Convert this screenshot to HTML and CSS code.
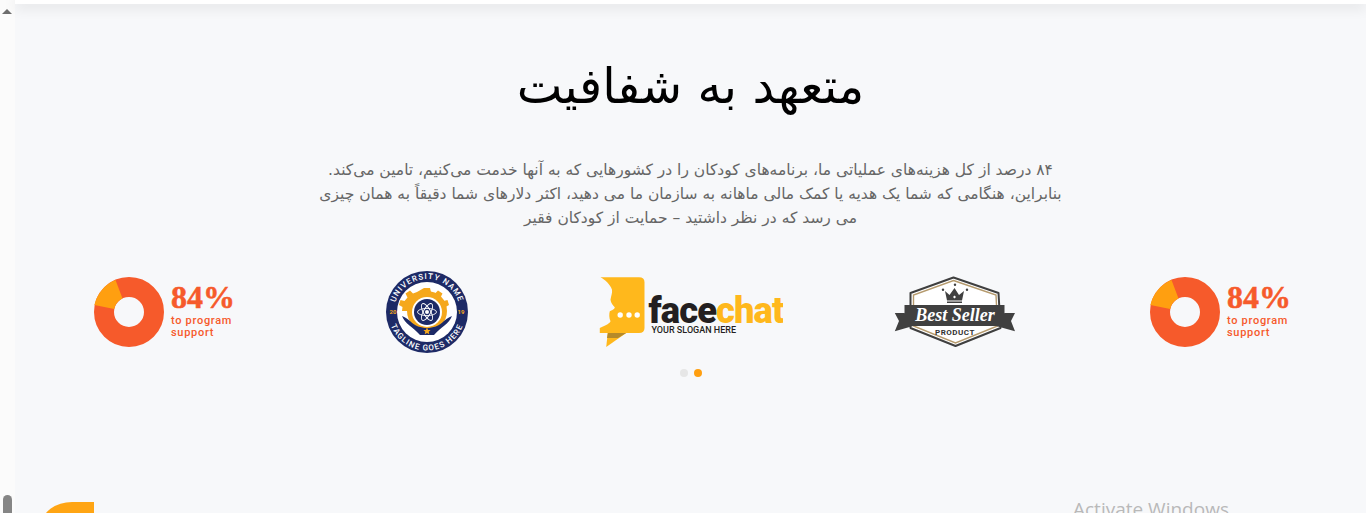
FILE: index.html
```html
<!DOCTYPE html>
<html lang="fa">
<head>
<meta charset="utf-8">
<title>متعهد به شفافیت</title>
<link rel="stylesheet" href="styles.css">
</head>
<body>
<div class="page">
  <aside class="scrollbar">
    <span class="scroll-arrow"></span>
    <span class="scroll-thumb"></span>
  </aside>
  <main class="main">
    <div class="topbar"></div>
    <section class="intro">
      <h1 class="title" dir="rtl">متعهد به شفافیت</h1>
      <p class="lead" dir="rtl">۸۴ درصد از کل هزینه‌های عملیاتی ما، برنامه‌های کودکان را در کشورهایی که به آنها خدمت می‌کنیم، تامین می‌کند.<br>بنابراین، هنگامی که شما یک هدیه یا کمک مالی ماهانه به سازمان ما می دهید، اکثر دلارهای شما دقیقاً به همان چیزی<br>می رسد که در نظر داشتید – حمایت از کودکان فقیر</p>
    </section>
    <section class="logos">
      <div class="logo logo-stat">
        <svg class="donut" width="70" height="70" viewBox="0 0 70 70">
          <circle cx="35" cy="35" r="25" fill="none" stroke="#f65a2b" stroke-width="20"/>
          <path d="M21.5 3 A35 35 0 0 0 0.4 28 L20.2 32 A15 15 0 0 1 28.5 21.5 Z" fill="#ff9f10"/>
        </svg>
        <div class="stat">
          <div class="stat-num">84%</div>
          <div class="stat-label">to program<br>support</div>
        </div>
      </div>
      <div class="logo">
        <svg width="82" height="82" viewBox="0 0 82 82">
          <defs>
            <path id="arcTop" d="M8 41 A33 33 0 0 1 74 41"/>
            <path id="arcBot" d="M2.500 41 A38.500 38.500 0 0 0 79.500 41"/>
          </defs>
          <circle cx="41" cy="41" r="41" fill="#1d2a66"/>
          <circle cx="41" cy="41" r="30" fill="#fff"/>
          <text class="uni-text"><textPath href="#arcTop" startOffset="50%" text-anchor="middle">UNIVERSITY NAME</textPath></text>
          <text class="uni-text"><textPath href="#arcBot" startOffset="50%" text-anchor="middle">TAGLINE GOES HERE</textPath></text>
          <text class="uni-year" x="7" y="43" text-anchor="middle">20</text>
          <text class="uni-year" x="75" y="43" text-anchor="middle">19</text>
          <circle cx="41" cy="40" r="20" fill="#f5a81c"/>
          <path d="M38 17 h6 l1 4 4 1.500 3-3 4.500 3-2 4 3 3.500 4-1 1.500 5-3.500 2 .5 4 H16 l.5-4-3.500-2 1.500-5 4 1 3-3.500-2-4 4.500-3 3 3 4-1.500z" fill="#f5a81c"/>
          <path d="M16 45 C19 53 27 56 34 64 L41 64 L48 64 C55 56 63 53 66 45 C62 47 60 48 58 50 C53 55 47 57 41 57 C35 57 29 55 24 50 C22 48 20 47 16 45Z" fill="#1d2a66"/>
          <circle cx="41" cy="41" r="15" fill="#fff"/>
          <circle cx="41" cy="41" r="13" fill="#1d2a66"/>
          <g fill="none" stroke="#fff" stroke-width=".9">
            <ellipse cx="41" cy="41" rx="9.500" ry="3.600"/>
            <ellipse cx="41" cy="41" rx="9.500" ry="3.600" transform="rotate(60 41 41)"/>
            <ellipse cx="41" cy="41" rx="9.500" ry="3.600" transform="rotate(120 41 41)"/>
          </g>
          <circle cx="41" cy="41" r="2" fill="#fff"/>
          <path d="M41 56.500 l1.100 2.400 2.500.2-1.900 1.700.6 2.500-2.300-1.300-2.300 1.300.6-2.500-1.900-1.700 2.500-.2z" fill="#f5a81c"/>
        </svg>
      </div>
      <div class="logo">
        <svg width="184" height="72" viewBox="0 0 184 72">
          <path d="M1.500 1.300 L40 1.300 Q45.500 1.300 45.500 6.300 L45.500 52 Q45.500 57 40 57 L0.800 57 L0.800 52 C5 50 10 48.500 11.500 45.300 C10 42 10 38 10.800 35.300 C12.500 34.500 15.500 33.500 15.800 31.300 C14 29 11.800 27 11.500 23.700 C12 20 13.500 17 13 13.700 C11 8 6 4 1.500 1.300 Z" fill="#ffb81c"/>
          <path d="M8.800 57 L27.200 57 L7.200 71 Z" fill="#ffb81c"/>
          <path d="M8.800 57 L27.200 57 L19 62 L8 62 Z" fill="#b58a2a"/>
          <circle cx="21.200" cy="39" r="2.700" fill="#fff"/>
          <circle cx="30" cy="39" r="2.700" fill="#fff"/>
          <circle cx="38.200" cy="39" r="2.700" fill="#fff"/>
          <text class="fc-word" x="49.500" y="47"><tspan fill="#231f20">face</tspan><tspan fill="#ffb81c">chat</tspan></text>
          <text class="fc-slogan" x="52.500" y="56.500">YOUR SLOGAN HERE</text>
        </svg>
      </div>
      <div class="logo">
        <svg width="122" height="72" viewBox="0 0 122 72">
          <path d="M59.500 1.500 L104.500 17 L106.500 52 L61.500 70 L16.500 52 L16.500 17 Z" fill="#fff" stroke="#3f3f3f" stroke-width="2" stroke-linejoin="round"/>
          <path d="M59.500 4.500 L102 19 L103.500 50 L61.500 67 L19.500 50 L19.500 19 Z" fill="none" stroke="#b59a6d" stroke-width="1.400"/>
          <path d="M10.500 37 L0.800 37 L5 45 L0.800 55.300 L19 50 L19 45 Z" fill="#404040"/>
          <path d="M110.500 37 L121 37 L117 45 L121 55.300 L102 50 L102 45 Z" fill="#404040"/>
          <rect x="10.500" y="29" width="100" height="21" fill="#404040"/>
          <path d="M53 24.500 L51 15 L55.500 19 L60.500 12 L65 19 L70 15 L68 24.500 Z" fill="#404040"/>
          <rect x="53" y="25.500" width="15" height="1.500" fill="#404040"/>
          <path d="M60.500 19.500 L62 21 L60.500 22.500 L59 21 Z" fill="#fff"/>
          <circle cx="49" cy="13.700" r="1.200" fill="#404040"/>
          <circle cx="61" cy="8.700" r="1.200" fill="#404040"/>
          <circle cx="73" cy="13.700" r="1.200" fill="#404040"/>
          <text class="bs-title" x="61" y="45" text-anchor="middle">Best Seller</text>
          <text class="bs-sub" x="61" y="59" text-anchor="middle">PRODUCT</text>
        </svg>
      </div>
      <div class="logo logo-stat">
        <svg class="donut" width="70" height="70" viewBox="0 0 70 70">
          <circle cx="35" cy="35" r="25" fill="none" stroke="#f65a2b" stroke-width="20"/>
          <path d="M21.5 3 A35 35 0 0 0 0.4 28 L20.2 32 A15 15 0 0 1 28.5 21.5 Z" fill="#ff9f10"/>
        </svg>
        <div class="stat">
          <div class="stat-num">84%</div>
          <div class="stat-label">to program<br>support</div>
        </div>
      </div>
    </section>
    <div class="dots"><span class="dot"></span><span class="dot dot-active"></span></div>
    <div class="next-shape"></div>
  </main>
</div>
<div class="activate">Activate Windows</div>
</body>
</html>
```
FILE: styles.css
```css
* { box-sizing: border-box; }
html, body { margin: 0; height: 513px; overflow: hidden; }
body { background: #f7f8fa; font-family: "DejaVu Sans", sans-serif; }
.page { display: flex; height: 513px; overflow: hidden; }
.scrollbar { width: 15px; flex: none; background: #fbfbfb; display: flex; flex-direction: column; justify-content: space-between; align-items: center; padding: 9px 0 0; }
.scroll-arrow { width: 0; height: 0; border-left: 5px solid transparent; border-right: 5px solid transparent; border-bottom: 5px solid #6e6e6e; margin-left: -1px; }
.scroll-thumb { width: 9px; height: 18px; background: #858585; border-radius: 5px 5px 0 0; margin-left: -1px; }
.main { flex: 1; min-width: 0; position: relative; display: flex; flex-direction: column; align-items: center; background: #f7f8fa; }
.topbar { width: 100%; height: 4px; flex: none; background: #fff; box-shadow: 0 2px 14px rgba(0,0,0,.2); }
.intro { display: flex; flex-direction: column; align-items: center; }
.title { margin: 46px 0 0; font-size: 48.5px; line-height: 72px; font-weight: 400; color: #000; }
.lead { margin: 36px 0 0; font-size: 15.5px; line-height: 24px; color: #666; text-align: center; white-space: nowrap; }
.logos { width: 1320px; display: grid; grid-template-columns: repeat(5, 264px); margin-top: 41px; height: 72px; }
.logo { display: flex; align-items: center; justify-content: center; gap: 7px; }
.logo-stat { padding-left: 3px; }
.stat { color: #f65a2b; width: 63px; }
.stat-num { font-family: "Liberation Serif", serif; font-weight: 700; font-size: 32px; line-height: 24px; margin-bottom: 6px; -webkit-text-stroke: .5px #f65a2b; }
.stat-label { font-family: Roboto, sans-serif; font-weight: 500; font-size: 11px; line-height: 12px; letter-spacing: .7px; white-space: nowrap; }
.uni-text { font-family: Roboto, sans-serif; font-weight: 500; font-size: 8px; letter-spacing: 1px; fill: #fff; }
.uni-year { font-family: Roboto, sans-serif; font-weight: 700; font-size: 6px; fill: #f5a81c; }
.fc-word { font-family: Roboto, sans-serif; font-weight: 900; font-size: 36.3px; letter-spacing: -.9px; }
.fc-slogan { font-family: Roboto, sans-serif; font-weight: 500; font-size: 9px; fill: #231f20; }
.bs-title { font-family: "Liberation Serif", serif; font-style: italic; font-weight: 700; font-size: 18px; fill: #fff; }
.bs-sub { font-family: Roboto, sans-serif; font-weight: 700; font-size: 8px; letter-spacing: .5px; fill: #333; }
.dots { display: flex; gap: 6px; margin-top: 26px; }
.dot { width: 8px; height: 8px; border-radius: 50%; background: #e6e6e6; }
.dot-active { background: #ff9f10; }
.next-shape { width: 52px; height: 40px; background: #ffa514; border-top-left-radius: 30px 22px; align-self: flex-start; margin: 125px 0 0 27px; flex: none; }
.activate { position: absolute; left: 1073px; top: 497px; font-family: "Open Sans", sans-serif; font-size: 19px; line-height: 24px; color: #b9b9b9; white-space: nowrap; }
```
